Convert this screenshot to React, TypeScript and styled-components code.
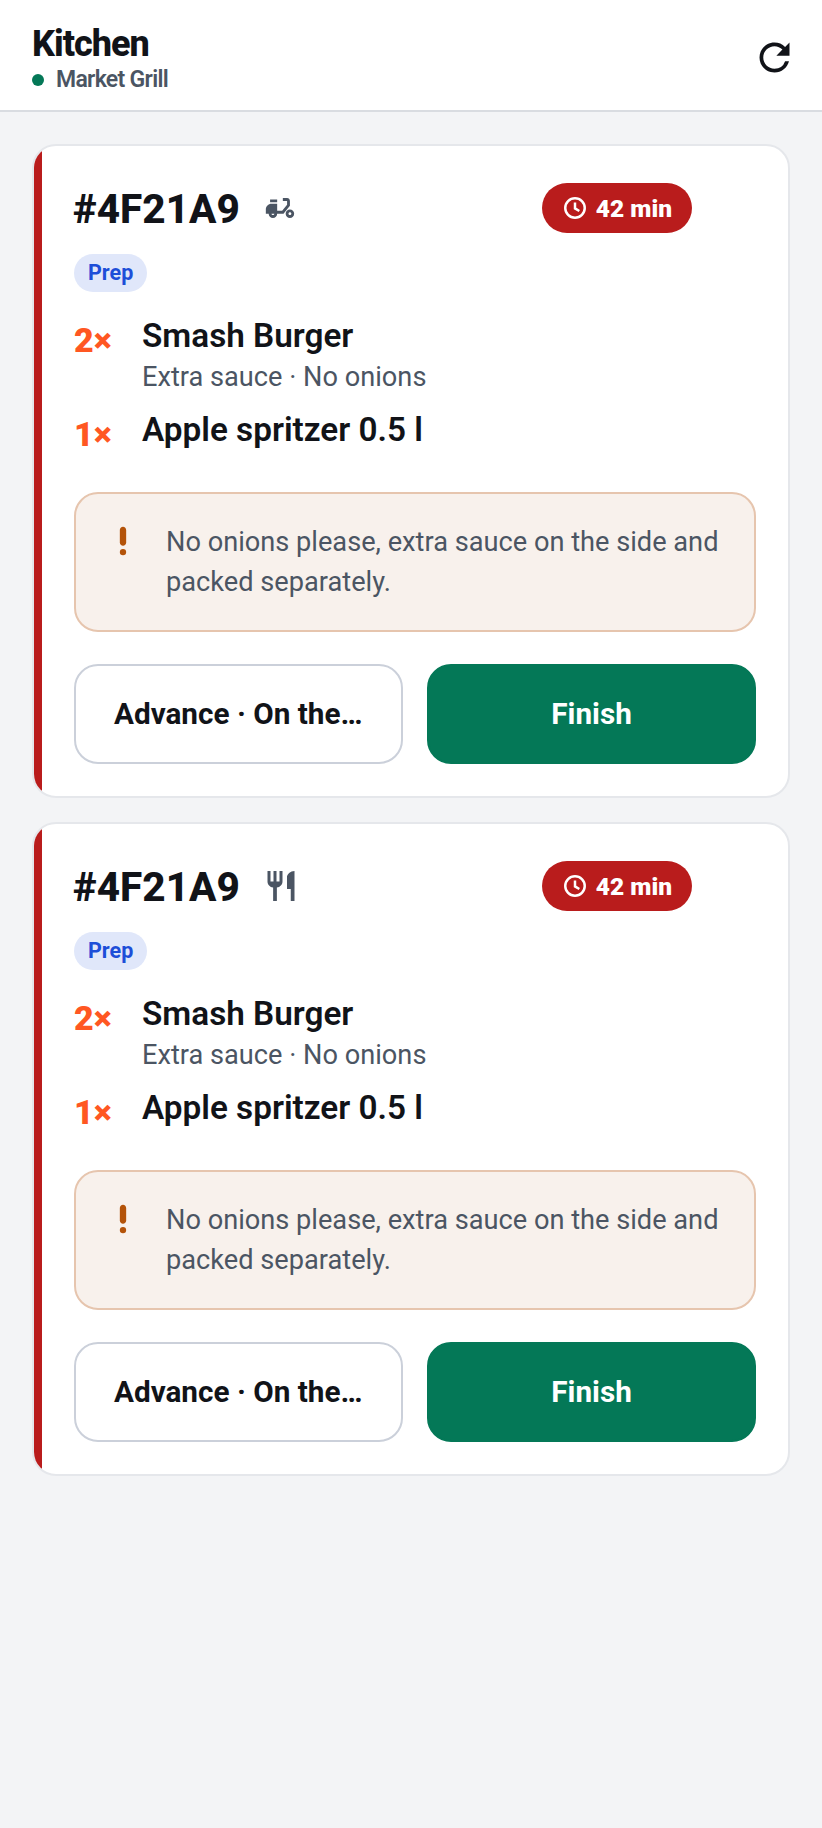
import { createGlobalStyle } from "styled-components";
import styled from "styled-components";
import { MdMoped, MdRefresh, MdRestaurant } from "react-icons/md";

const GlobalStyle = createGlobalStyle`
  html, body {
    margin: 0;
    padding: 0;
    background: #f3f4f6;
    font-family: Roboto, "Liberation Sans", sans-serif;
    color: #111318;
  }
  * { box-sizing: border-box; }
`;

const Page = styled.div`
  min-height: 1828px;
  background: #f3f4f6;
`;

const Header = styled.header`
  display: flex;
  align-items: center;
  justify-content: space-between;
  height: 112px;
  padding: 4px 25px 0 32px;
  background: #fff;
  border-bottom: 2px solid #d9dce1;
`;

const Brand = styled.div`
  padding-top: 2px;
`;

const Title = styled.h1`
  margin: 0;
  font-size: 36px;
  line-height: 44px;
  font-weight: 800;
  letter-spacing: -1px;
`;

const Venue = styled.div`
  display: flex;
  align-items: center;
  gap: 12px;
  font-size: 23px;
  line-height: 28px;
  font-weight: 600;
  letter-spacing: -0.7px;
  color: #4b5563;
`;

const Dot = styled.span`
  width: 12px;
  height: 12px;
  border-radius: 50%;
  background: #047857;
`;

const RefreshButton = styled.button`
  display: flex;
  padding: 0;
  border: 0;
  background: none;
  color: #111318;
`;

const List = styled.main`
  display: flex;
  flex-direction: column;
  gap: 24px;
  padding: 32px;
`;

const Card = styled.article`
  position: relative;
  overflow: hidden;
  padding: 37px 32px 32px 40px;
  background: #fff;
  border: 2px solid #e5e7eb;
  border-radius: 24px;

  &::before {
    content: "";
    position: absolute;
    top: 0;
    bottom: 0;
    left: 0;
    width: 8px;
    background: #b91c1c;
  }
`;

const CardTop = styled.div`
  display: flex;
  align-items: center;
  height: 50px;
  padding-right: 64px;
`;

const OrderId = styled.h2`
  margin: 2px 0 0 -1px;
  font-size: 40.5px;
  font-weight: 800;
`;

const Service = styled.span`
  display: flex;
  margin-left: 23px;
  color: #4b5563;
`;

const Timer = styled.span`
  display: flex;
  align-items: center;
  gap: 8px;
  height: 50px;
  margin-left: auto;
  padding: 0 20px;
  border-radius: 25px;
  background: #b91c1c;
  color: #fff;
  font-size: 24.5px;
  font-weight: 900;
`;

const ClockIcon = styled.svg`
  width: 26px;
  height: 26px;
  fill: none;
  stroke: currentColor;
  stroke-width: 2.3;
`;

const Status = styled.span`
  display: inline-block;
  height: 38px;
  margin-top: 21px;
  padding: 0 14px;
  border-radius: 19px;
  background: #e0e7fa;
  color: #1d4ed8;
  font-size: 21.5px;
  line-height: 38px;
  font-weight: 700;
`;

const Items = styled.div`
  display: flex;
  flex-direction: column;
  gap: 14px;
  margin-top: 22px;
`;

const Item = styled.div`
  display: grid;
  grid-template-columns: 68px 1fr;
`;

const Qty = styled.span`
  padding-top: 4px;
  color: #ff5722;
  font-size: 34px;
  line-height: 44px;
  font-weight: 900;
`;

const ItemName = styled.div`
  font-size: 33.3px;
  line-height: 44px;
  font-weight: 600;
`;

const ItemMods = styled.div`
  margin-top: 3px;
  margin-bottom: 1px;
  font-size: 27.2px;
  line-height: 32px;
  color: #4b5563;
`;

const Note = styled.div`
  display: flex;
  gap: 24px;
  margin-top: 36px;
  padding: 28px;
  background: #f8f1ec;
  border: 2px solid #e6c5ae;
  border-radius: 24px;
  color: #4b5563;
  font-size: 27.2px;
  line-height: 40px;
`;

const NoteIcon = styled.svg`
  flex: none;
  width: 38px;
  height: 38px;
  fill: #b45309;
`;

const Actions = styled.div`
  display: grid;
  grid-template-columns: 1fr 1fr;
  gap: 24px;
  margin-top: 32px;
`;

const ActionButton = styled.button<{ $primary?: boolean }>`
  height: 100px;
  padding: 0 38px 2px;
  overflow: hidden;
  border: 2px solid ${(p) => (p.$primary ? "#047857" : "#cbd0da")};
  border-radius: 24px;
  background: ${(p) => (p.$primary ? "#047857" : "#fff")};
  color: ${(p) => (p.$primary ? "#fff" : "#111318")};
  font-family: inherit;
  font-size: 29.7px;
  font-weight: 700;
  white-space: nowrap;
  text-overflow: ellipsis;
`;

function OrderCard({ service }: { service: React.ReactNode }) {
  return (
    <Card>
      <CardTop>
        <OrderId>#4F21A9</OrderId>
        <Service>{service}</Service>
        <Timer>
          <ClockIcon viewBox="0 0 24 24">
            <circle cx="12" cy="12" r="9" />
            <path d="M12 7v5.4l4 2.4" />
          </ClockIcon>
          42 min
        </Timer>
      </CardTop>
      <Status>Prep</Status>
      <Items>
        <Item>
          <Qty>2×</Qty>
          <div>
            <ItemName>Smash Burger</ItemName>
            <ItemMods>Extra sauce · No onions</ItemMods>
          </div>
        </Item>
        <Item>
          <Qty>1×</Qty>
          <ItemName>Apple spritzer 0.5 l</ItemName>
        </Item>
      </Items>
      <Note>
        <NoteIcon viewBox="0 0 24 24">
          <circle cx="12" cy="19" r="2" />
          <path d="M12 3c-1.1 0-2 .9-2 2v8c0 1.1.9 2 2 2s2-.9 2-2V5c0-1.1-.9-2-2-2z" />
        </NoteIcon>
        <span>No onions please, extra sauce on the side and packed separately.</span>
      </Note>
      <Actions>
        <ActionButton>Advance · On the way</ActionButton>
        <ActionButton $primary>Finish</ActionButton>
      </Actions>
    </Card>
  );
}

export default function App() {
  return (
    <Page>
      <GlobalStyle />
      <Header>
        <Brand>
          <Title>Kitchen</Title>
          <Venue>
            <Dot />
            Market Grill
          </Venue>
        </Brand>
        <RefreshButton aria-label="Refresh">
          <MdRefresh size={45} />
        </RefreshButton>
      </Header>
      <List>
        <OrderCard service={<MdMoped size={34} />} />
        <OrderCard service={<MdRestaurant size={36} />} />
      </List>
    </Page>
  );
}
